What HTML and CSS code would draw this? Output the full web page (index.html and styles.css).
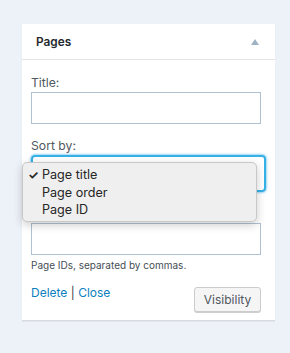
FILE: index.html
```html
<!DOCTYPE html>
<html>
<head>
<meta charset="utf-8">
<link rel="stylesheet" href="styles.css">
</head>
<body>
<div class="widget">
  <div class="widget-top">
    <h3 class="widget-title">Pages</h3>
    <svg class="toggle" width="8" height="6" viewBox="0 0 8 6"><polygon points="4,0 8,6 0,6" fill="#9db3c5"/></svg>
  </div>
  <div class="widget-inside">
    <div class="field">
      <label class="lbl">Title:</label>
      <div class="input"></div>
    </div>
    <div class="field sort">
      <label class="lbl">Sort by:</label>
      <div class="select"></div>
      <ul class="menu">
        <li class="checked"><span class="check">✓</span>Page title</li>
        <li><span class="check"></span>Page order</li>
        <li><span class="check"></span>Page ID</li>
      </ul>
    </div>
    <div class="field exclude">
      <div class="input"></div>
      <small class="help">Page IDs, separated by commas.</small>
    </div>
    <div class="actions">
      <div class="links"><a class="link">Delete</a> <span class="sep">|</span> <a class="link">Close</a></div>
      <button class="btn">Visibility</button>
    </div>
  </div>
</div>
</body>
</html>
```
FILE: styles.css
```css
* { box-sizing: border-box; }
html, body { margin: 0; padding: 0; }
body {
  background: #edf1f8;
  font-family: Inter, "Open Sans", "Liberation Sans", sans-serif;
  color: #32373c;
  width: 290px;
  height: 353px;
  overflow: hidden;
}
.widget {
  margin: 24px 0 0 22px;
  width: 253px;
  background: #fff;
  box-shadow: 0 1px 1px rgba(0,0,0,0.05), 0 2px 0 #e4e7ec;
}
.widget-top {
  height: 36px;
  border-bottom: 1px solid #e3e5e8;
  display: flex;
  align-items: center;
  justify-content: space-between;
  padding: 0 16px 0 14px;
}
.widget-title {
  margin: 0;
  font-size: 11.8px;
  font-weight: 600;
  color: #23282d;
}
.toggle { display: block; }
.widget-inside {
  padding: 15px 14px 8px 9px;
  display: flex;
  flex-direction: column;
}
.field { display: flex; flex-direction: column; position: relative; }
.lbl {
  font-size: 12.2px;
  line-height: 16px;
  color: #4f5960;
  margin-bottom: 1px;
}
.input {
  height: 32px;
  width: 230px;
  border: 1px solid #b0c2d2;
  background: #fff;
}
.sort { margin-top: 14px; }
.select {
  height: 37px;
  width: 235px;
  border: 2px solid #35b1e6;
  border-radius: 4px;
  box-shadow: 0 0 2px 1px rgba(30,160,230,0.45);
}
.menu {
  position: absolute;
  left: -9px;
  top: 24px;
  width: 235px;
  height: 60px;
  margin: 0;
  padding: 3px 0 3px;
  list-style: none;
  background: #efefef;
  border: 1px solid #c8c8c8;
  border-radius: 5px;
  box-shadow: 0 3px 10px rgba(0,0,0,0.2);
  z-index: 5;
  font-size: 12.6px;
  color: #262626;
}
.menu li {
  height: 17.5px;
  line-height: 17.5px;
  display: flex;
  align-items: center;
}
.check { width: 19px; padding-left: 5px; font-size: 12px; font-weight: 700; }
.exclude { margin-top: 31px; }
.help {
  font-size: 10px;
  color: #454d55;
  margin-top: 4px;
  line-height: 13px;
}
.actions {
  margin-top: 13px;
  display: flex;
  justify-content: space-between;
  align-items: flex-start;
}
.links {
  font-size: 12px;
  line-height: 16px;
  color: #3c434a;
}
.link { color: #0a7fbd; text-decoration: none; }
.sep { color: #3c434a; }
.btn {
  margin-top: 2px;
  height: 25px;
  width: 67px;
  padding: 0;
  font-family: inherit;
  font-size: 12px;
  color: #50575e;
  background: #f5f5f6;
  border: 1px solid #cccccc;
  border-radius: 3px;
  box-shadow: 0 1px 0 #cfcfcf;
}
```
